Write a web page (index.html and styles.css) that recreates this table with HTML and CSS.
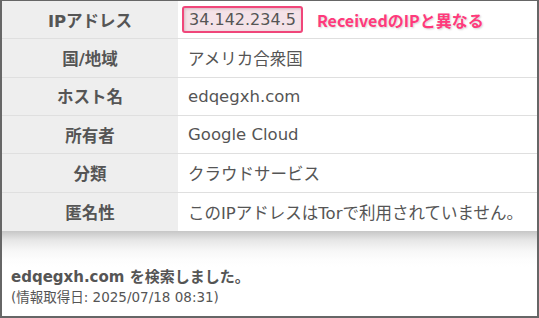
FILE: index.html
```html
<!DOCTYPE html>
<html lang="ja">
<head>
<meta charset="utf-8">
<link rel="stylesheet" href="styles.css">
</head>
<body>
<div class="frame">
  <div class="info">
    <div class="row">
      <div class="label">IPアドレス</div>
      <div class="value"><span class="ip">34.142.234.5</span><span class="note">ReceivedのIPと異なる</span></div>
    </div>
    <div class="row">
      <div class="label">国/地域</div>
      <div class="value">アメリカ合衆国</div>
    </div>
    <div class="row">
      <div class="label">ホスト名</div>
      <div class="value">edqegxh.com</div>
    </div>
    <div class="row">
      <div class="label">所有者</div>
      <div class="value">Google Cloud</div>
    </div>
    <div class="row">
      <div class="label">分類</div>
      <div class="value">クラウドサービス</div>
    </div>
    <div class="row last">
      <div class="label">匿名性</div>
      <div class="value">このIPアドレスはTorで利用されていません。</div>
    </div>
  </div>
  <div class="shade"></div>
  <div class="footer">
    <p class="searched">edqegxh.com を検索しました。</p>
    <p class="date">(情報取得日: 2025/07/18 08:31)</p>
  </div>
</div>
</body>
</html>
```
FILE: styles.css
```css
html, body {
  margin: 0;
  padding: 0;
  background: #fff;
}

.frame {
  width: 539px;
  height: 318px;
  box-sizing: border-box;
  border: 2px solid #666;
  border-top-width: 1px;
  overflow: hidden;
  background: #fff;
  font-family: "DejaVu Sans", "Noto Sans CJK JP", sans-serif;
  color: #555;
}

.info {
  display: flex;
  flex-direction: column;
}

.row {
  display: grid;
  grid-template-columns: 177px 1fr;
  height: 38.33px;
  box-sizing: border-box;
  border-bottom: 1px solid #dfdfdf;
}

.row.last {
  border-bottom: none;
}

.label {
  background: #eeeeee;
  border-right: 1px solid #fff;
  display: flex;
  align-items: center;
  justify-content: center;
  font-weight: bold;
  font-size: 16.5px;
}

.value {
  display: flex;
  align-items: center;
  padding-left: 9px;
  font-size: 16.5px;
  background: #fff;
  white-space: nowrap;
}

.ip {
  display: inline-block;
  margin-left: -6px;
  padding: 1px 5px 0 5px;
  height: 22px;
  line-height: 22px;
  font-size: 16px;
  border: 2px solid #f0467a;
  border-radius: 3px;
  background: #f4e2e8;
  box-shadow: inset 1px 1px 3px rgba(120, 60, 80, 0.25);
}

.note {
  margin-left: 14px;
  font-family: "Noto Sans CJK JP", sans-serif;
  font-weight: bold;
  font-size: 16px;
  color: #ff3a7c;
  text-shadow: 1px 1px 2px rgba(0, 0, 0, 0.18);
}

.shade {
  height: 36px;
  background: linear-gradient(#c6c6c6, #e6e6e6 25%, #f7f7f7 55%, #fdfdfd 80%, #fff);
}

.footer {
  padding-left: 9px;
}

.footer p {
  margin: 0;
  line-height: 20px;
}

.searched {
  font-weight: bold;
  font-size: 15px;
}

.date {
  font-size: 13.5px;
}
```
